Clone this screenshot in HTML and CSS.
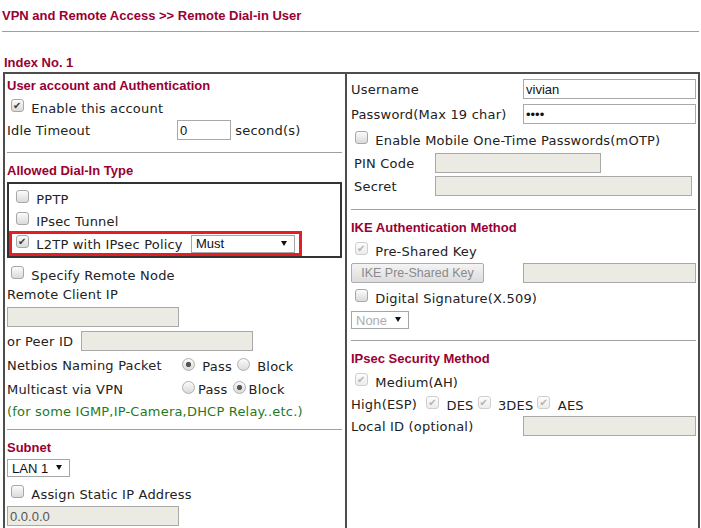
FILE: index.html
```html
<!DOCTYPE html>
<html lang="en">
<head>
    <meta charset="UTF-8">
    <meta name="viewport" content="width=device-width, initial-scale=1.0">
    <title>Remote Dial-in User</title>
    <link rel="stylesheet" href="styles.css">
</head>
<body>
    <div class="title">VPN and Remote Access &gt;&gt; Remote Dial-in User</div>
    <div class="index">Index No. 1</div>
    <div class="panel">
        <div class="col left">
            <div class="row head r22">User account and Authentication</div>
            <div class="row r23"><label><input type="checkbox" class="cb" checked> Enable this account</label></div>
            <div class="row r22">
                <span class="lab">Idle Timeout</span>
                <span><input type="text" class="txt idle" value="0"> second(s)</span>
            </div>
            <hr class="sep">
            <div class="row head r23">Allowed Dial-In Type</div>
            <div class="dialin">
                <div class="row r23"><label><input type="checkbox" class="cb"> PPTP</label></div>
                <div class="row r21"><label><input type="checkbox" class="cb"> IPsec Tunnel</label></div>
                <div class="row l2tp">
                    <label><input type="checkbox" class="cb" checked> L2TP with IPsec Policy</label>
                    <span class="sel must"><select><option>Must</option><option>Nice to Have</option><option>None</option></select></span>
                </div>
            </div>
            <div class="row r24 specify"><label><input type="checkbox" class="cb"> Specify Remote Node</label></div>
            <div class="row r16">Remote Client IP</div>
            <div class="row r20 gap5"><input type="text" class="txt wide off" disabled></div>
            <div class="row r24 gap2">
                <span>or Peer ID</span>
                <input type="text" class="txt wide off peer" disabled>
            </div>
            <div class="row r25">
                <span class="lab">Netbios Naming Packet</span>
                <label><input type="radio" name="nb" class="rb" checked> Pass</label>
                <label><input type="radio" name="nb" class="rb"> Block</label>
            </div>
            <div class="row r22">
                <span class="lab">Multicast via VPN</span>
                <label><input type="radio" name="mc" class="rb">Pass</label>
                <label><input type="radio" name="mc" class="rb" checked>Block</label>
            </div>
            <div class="row r22 note">(for some IGMP,IP-Camera,DHCP Relay..etc.)</div>
            <hr class="sep short">
            <div class="row head r22">Subnet</div>
            <div class="row r20"><span class="sel lan"><select><option>LAN 1</option><option>LAN 2</option></select></span></div>
            <div class="row r26 gap2"><label><input type="checkbox" class="cb"> Assign Static IP Address</label></div>
            <div class="row r20"><input type="text" class="txt wide off" value="0.0.0.0" disabled></div>
        </div>

        <div class="col right">
            <div class="row r24">
                <span class="lab">Username</span>
                <input type="text" class="txt user" value="vivian">
            </div>
            <div class="row r26">
                <span class="lab">Password(Max 19 char)</span>
                <input type="password" class="txt user" value="abcd">
            </div>
            <div class="row r25"><label><input type="checkbox" class="cb"> Enable Mobile One-Time Passwords(mOTP)</label></div>
            <div class="row r22 otp">
                <span class="lab">PIN Code</span>
                <input type="text" class="txt off pin" disabled>
            </div>
            <div class="row r24 otp">
                <span class="lab">Secret</span>
                <input type="text" class="txt off secret" disabled>
            </div>
            <hr class="sep">
            <div class="row head r23">IKE Authentication Method</div>
            <div class="row r22"><label><input type="checkbox" class="cb" checked disabled> Pre-Shared Key</label></div>
            <div class="row r23">
                <span class="lab"><button class="btn" disabled>IKE Pre-Shared Key</button></span>
                <input type="text" class="txt user off" disabled>
            </div>
            <div class="row r26"><label><input type="checkbox" class="cb"> Digital Signature(X.509)</label></div>
            <div class="row r20"><span class="sel none"><select disabled><option>None</option></select></span></div>
            <hr class="sep low">
            <div class="row head r22">IPsec Security Method</div>
            <div class="row r24"><label><input type="checkbox" class="cb" checked disabled> Medium(AH)</label></div>
            <div class="row r22">
                <span>High(ESP)</span>
                <label class="esp"><input type="checkbox" class="cb" checked disabled> DES</label>
                <label><input type="checkbox" class="cb" checked disabled> 3DES</label>
                <label><input type="checkbox" class="cb" checked disabled> AES</label>
            </div>
            <div class="row r22">
                <span class="lab">Local ID (optional)</span>
                <input type="text" class="txt user off" disabled>
            </div>
        </div>
    </div>
</body>
</html>
```

FILE: styles.css
```css
body {
    margin: 0;
    font-family: "DejaVu Sans", Verdana, sans-serif;
    font-size: 13px;
    letter-spacing: 0.2px;
    color: #222;
    background: #fff;
}
.title {
    margin-left: 2px;
    width: 697px;
    height: 32px;
    box-sizing: border-box;
    border-bottom: 1px solid #a0a0a0;
    font-family: "Liberation Sans", Arial, sans-serif;
    font-weight: bold;
    letter-spacing: 0;
    line-height: 31px;
    color: #990033;
}
.index {
    padding: 22px 0 0 4px;
    height: 18px;
    line-height: 18px;
    font-family: "Liberation Sans", Arial, sans-serif;
    font-weight: bold;
    letter-spacing: 0;
    color: #990033;
}
.panel {
    margin-left: 3px;
    width: 697px;
    box-sizing: border-box;
    border: 2px solid #4d4d4d;
    display: grid;
    grid-template-columns: 340px 1fr;
}
.left {
    padding: 0 0 6px 2px;
}
.right {
    border-left: 2px solid #4d4d4d;
    padding: 3px 0 6px 4px;
}
.row {
    display: flex;
    align-items: center;
    white-space: nowrap;
}
.r16 { height: 16px; }
.r20 { height: 20px; }
.r21 { height: 21px; }
.r22 { height: 22px; }
.r23 { height: 23px; }
.r24 { height: 24px; }
.r25 { height: 25px; }
.r26 { height: 26px; }
.gap2 { margin-top: 2px; }
.gap5 { margin-top: 5px; }
.specify { margin-top: 4px; }
.head {
    font-family: "Liberation Sans", Arial, sans-serif;
    font-weight: bold;
    letter-spacing: 0;
    color: #990033;
}
.note {
    color: #1f7a1f;
}
.lab {
    display: inline-block;
    width: 170px;
}
.right .lab {
    width: 172px;
}
.otp {
    padding-left: 3px;
}
.right .otp .lab {
    width: 81px;
}
.sep {
    border: 0;
    border-top: 1px solid #a0a0a0;
    height: 0;
    margin: 11px 3px 6px 0;
}
.sep.short {
    margin-top: 7px;
}
.right .sep {
    margin-right: 2px;
}
.right .sep.low {
    margin-top: 10px;
}

/* inputs */
.txt {
    box-sizing: border-box;
    height: 20px;
    margin: 0;
    padding: 0 2px;
    border: 1px solid #a9a9a9;
    font-family: "Liberation Sans", Arial, sans-serif;
    font-size: 13px;
    letter-spacing: 0;
    color: #111;
    background: #fff;
}
.txt.off {
    background: #ebebe4;
    color: #555;
}
.idle { width: 54px; }
.wide { width: 172px; }
.peer { margin-left: 8px; }
.user { width: 173px; }
.pin { width: 166px; }
.secret { width: 257px; }

.cb {
    appearance: none;
    -webkit-appearance: none;
    position: relative;
    width: 13px;
    height: 13px;
    margin: 0 3px 0 4px;
    vertical-align: 1px;
    box-sizing: border-box;
    border: 1px solid #a7a7a7;
    border-radius: 3px;
    background: linear-gradient(#fbfbfb, #dadada);
}
.cb:checked::after {
    content: "\2714";
    position: absolute;
    left: 1px;
    top: 0;
    font-family: "DejaVu Sans", sans-serif;
    font-size: 10px;
    line-height: 11px;
    color: #3a3a3a;
}
.cb:disabled {
    border-color: #cfcfcf;
    background: linear-gradient(#fdfdfd, #ececec);
}
.cb:disabled:checked::after {
    color: #b4b4b4;
}
.rb {
    appearance: none;
    -webkit-appearance: none;
    width: 13px;
    height: 13px;
    margin: 0 3px 0 5px;
    vertical-align: 0;
    box-sizing: border-box;
    border: 1px solid #b0b0b0;
    border-radius: 50%;
    background: linear-gradient(#fbfbfb, #dadada);
}
.rb:checked {
    background: radial-gradient(circle, #555 0 2.2px, transparent 3px), linear-gradient(#fbfbfb, #dadada);
}

.dialin {
    margin-right: 3px;
    border: 2px solid #333;
    padding: 3px 0 0 3px;
}
.l2tp {
    margin-left: -3px;
    width: 293px;
    height: 25px;
    box-sizing: border-box;
    border: 3px solid #e31e24;
}

.sel {
    position: relative;
    display: inline-block;
    height: 18px;
    box-sizing: border-box;
    border: 1px solid #a6a6a6;
    background: #fff;
}
.sel select {
    appearance: none;
    -webkit-appearance: none;
    display: block;
    width: 100%;
    height: 16px;
    margin: 0;
    padding: 0 0 0 4px;
    border: 0;
    background: transparent;
    font-family: "Liberation Sans", Arial, sans-serif;
    font-size: 13px;
    letter-spacing: 0;
    color: #111;
}
.sel::after {
    content: "";
    position: absolute;
    right: 7px;
    top: 5px;
    border-left: 3px solid transparent;
    border-right: 3px solid transparent;
    border-top: 5px solid #111;
}
.must {
    width: 104px;
    margin-left: auto;
    margin-right: 4px;
}
.lan { width: 63px; }
.none { width: 58px; }
.none select {
    color: #8a8a8a;
}

.btn {
    width: 133px;
    height: 20px;
    margin: 0;
    padding: 0;
    border: 1px solid #acacac;
    border-radius: 2px;
    background: linear-gradient(#f4f4f4, #dcdcdc);
    font-family: "Liberation Sans", Arial, sans-serif;
    font-size: 12.5px;
    letter-spacing: 0;
    color: #8a8a8a;
}
.esp .cb {
    margin-left: 9px;
}
```
